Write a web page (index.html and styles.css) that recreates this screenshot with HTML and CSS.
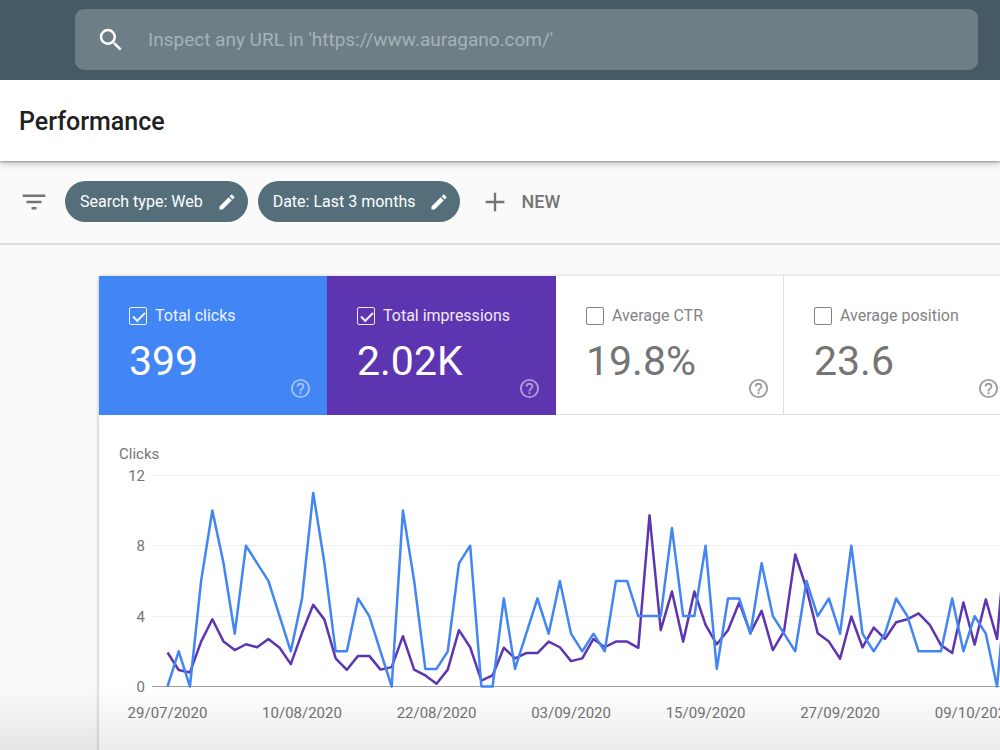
FILE: index.html
```html
<!DOCTYPE html>
<html lang="en">
<head>
    <meta charset="UTF-8">
    <meta name="viewport" content="width=device-width, initial-scale=1.0">
    <title>Performance</title>
    <link rel="stylesheet" href="styles.css">
</head>
<body>
    <header class="topbar">
        <form class="search" role="search">
            <svg class="search-icon" viewBox="0 0 24 24" aria-hidden="true">
                <path d="M15.5 14h-.79l-.28-.27A6.47 6.47 0 0 0 16 9.5 6.5 6.5 0 1 0 9.5 16c1.61 0 3.09-.59 4.23-1.57l.27.28v.79l5 4.99L20.49 19l-4.99-5zm-6 0a4.5 4.5 0 1 1 0-9 4.5 4.5 0 0 1 0 9z"/>
            </svg>
            <input type="text" class="search-input" aria-label="Inspect URL" placeholder="Inspect any URL in 'https://www.auragano.com/'">
        </form>
    </header>

    <div class="page-header">
        <h1>Performance</h1>
    </div>

    <div class="filters">
        <svg class="filter-icon" viewBox="0 0 24 24" aria-hidden="true">
            <path d="M10 18h4v-2h-4v2zM3 6v2h18V6H3zm3 7h12v-2H6v2z"/>
        </svg>
        <button type="button" class="chip">
            Search type: Web
            <svg class="chip-icon" viewBox="0 0 24 24" aria-hidden="true">
                <path d="M3 17.25V21h3.75L17.81 9.94l-3.75-3.75L3 17.25zM20.71 7.04a1 1 0 0 0 0-1.41l-2.34-2.34a1 1 0 0 0-1.41 0l-1.83 1.83 3.75 3.75 1.83-1.83z"/>
            </svg>
        </button>
        <button type="button" class="chip">
            Date: Last 3 months
            <svg class="chip-icon" viewBox="0 0 24 24" aria-hidden="true">
                <path d="M3 17.25V21h3.75L17.81 9.94l-3.75-3.75L3 17.25zM20.71 7.04a1 1 0 0 0 0-1.41l-2.34-2.34a1 1 0 0 0-1.41 0l-1.83 1.83 3.75 3.75 1.83-1.83z"/>
            </svg>
        </button>
        <button type="button" class="new-filter">
            <svg class="plus-icon" viewBox="0 0 24 24" aria-hidden="true">
                <path d="M20 13h-7v7h-2v-7H4v-2h7V4h2v7h7v2z"/>
            </svg>
            NEW
        </button>
    </div>

    <main class="content">
        <section class="card">
            <div class="metrics">
                <div class="metric metric-clicks">
                    <label class="metric-label"><input type="checkbox" checked>Total clicks</label>
                    <div class="metric-value">399</div>
                    <button type="button" class="help" aria-label="Help">
                        <svg viewBox="0 0 24 24"><path d="M11 18h2v-2h-2v2zm1-16a10 10 0 1 0 0 20 10 10 0 0 0 0-20zm0 18a8 8 0 1 1 0-16 8 8 0 0 1 0 16zm0-14a4 4 0 0 0-4 4h2a2 2 0 1 1 4 0c0 2-3 1.75-3 5h2c0-2.25 3-2.5 3-5a4 4 0 0 0-4-4z"/></svg>
                    </button>
                </div>
                <div class="metric metric-impressions">
                    <label class="metric-label"><input type="checkbox" checked>Total impressions</label>
                    <div class="metric-value">2.02K</div>
                    <button type="button" class="help" aria-label="Help">
                        <svg viewBox="0 0 24 24"><path d="M11 18h2v-2h-2v2zm1-16a10 10 0 1 0 0 20 10 10 0 0 0 0-20zm0 18a8 8 0 1 1 0-16 8 8 0 0 1 0 16zm0-14a4 4 0 0 0-4 4h2a2 2 0 1 1 4 0c0 2-3 1.75-3 5h2c0-2.25 3-2.5 3-5a4 4 0 0 0-4-4z"/></svg>
                    </button>
                </div>
                <div class="metric">
                    <label class="metric-label"><input type="checkbox">Average CTR</label>
                    <div class="metric-value">19.8%</div>
                    <button type="button" class="help" aria-label="Help">
                        <svg viewBox="0 0 24 24"><path d="M11 18h2v-2h-2v2zm1-16a10 10 0 1 0 0 20 10 10 0 0 0 0-20zm0 18a8 8 0 1 1 0-16 8 8 0 0 1 0 16zm0-14a4 4 0 0 0-4 4h2a2 2 0 1 1 4 0c0 2-3 1.75-3 5h2c0-2.25 3-2.5 3-5a4 4 0 0 0-4-4z"/></svg>
                    </button>
                </div>
                <div class="metric">
                    <label class="metric-label"><input type="checkbox">Average position</label>
                    <div class="metric-value">23.6</div>
                    <button type="button" class="help" aria-label="Help">
                        <svg viewBox="0 0 24 24"><path d="M11 18h2v-2h-2v2zm1-16a10 10 0 1 0 0 20 10 10 0 0 0 0-20zm0 18a8 8 0 1 1 0-16 8 8 0 0 1 0 16zm0-14a4 4 0 0 0-4 4h2a2 2 0 1 1 4 0c0 2-3 1.75-3 5h2c0-2.25 3-2.5 3-5a4 4 0 0 0-4-4z"/></svg>
                    </button>
                </div>
            </div>

            <svg class="chart" id="chart" width="960" height="340" role="img" aria-label="Clicks and impressions per day">
                <text class="axis-title" x="20" y="44">Clicks</text>
            </svg>
        </section>
    </main>

    <script src="chart.js"></script>
</body>
</html>
```
FILE: styles.css
```css
:root {
    --topbar: #455a64;
    --chip: #546e7a;
    --clicks: #4285f4;
    --impressions: #5e35b1;
    --grey: #757575;
    --line: #e0e0e0;
}

* {
    margin: 0;
    padding: 0;
    box-sizing: border-box;
}

body {
    font-family: Roboto, Arial, sans-serif;
    font-size: 16px;
    background-color: #fafafa;
    color: #212121;
    height: 100vh;
    overflow: hidden;
}

/* fade at the bottom edge of the window */
body::after {
    content: "";
    position: fixed;
    left: 0;
    right: 0;
    bottom: 0;
    height: 64px;
    background: linear-gradient(rgba(0, 0, 0, 0), rgba(0, 0, 0, 0.08));
    pointer-events: none;
}

button {
    font: inherit;
    color: inherit;
    border: none;
    background: none;
    cursor: pointer;
}

svg {
    display: block;
    fill: currentColor;
}

.topbar {
    position: relative;
    z-index: 1;
    background-color: var(--topbar);
    padding: 9px 22px 10px 75px;
}

.search {
    display: flex;
    align-items: center;
    gap: 22px;
    height: 61px;
    padding: 0 21px;
    border-radius: 9px;
    background-color: #6d7e86;
}

.search-icon {
    width: 30px;
    height: 30px;
    color: #fff;
}

.search-input {
    flex: 1;
    border: none;
    outline: none;
    background: none;
    font: 19px Roboto, Arial, sans-serif;
    color: #fff;
}

.search-input::placeholder {
    color: #a7b2b7;
    opacity: 1;
}

.page-header {
    position: relative;
    padding: 26px 19px 24px;
    background-color: #fff;
    box-shadow: 0 1px 2px rgba(0, 0, 0, 0.3), 0 2px 8px rgba(0, 0, 0, 0.25);
}

h1 {
    font-size: 25px;
    font-weight: 500;
    line-height: 31px;
}

.filters {
    display: flex;
    align-items: center;
    gap: 10px;
    padding: 20px 19px 21px;
    border-bottom: 2px solid var(--line);
}

.filter-icon {
    width: 30px;
    height: 30px;
    margin-right: 6px;
    color: var(--grey);
}

.chip {
    display: flex;
    align-items: center;
    gap: 14px;
    height: 41px;
    padding: 0 11px 0 15px;
    border-radius: 21px;
    background-color: var(--chip);
    color: #fff;
}

.chip-icon {
    width: 20px;
    height: 20px;
}

.new-filter {
    display: flex;
    align-items: center;
    gap: 12px;
    margin-left: 11px;
    font-size: 18px;
    font-weight: 500;
    color: var(--grey);
}

.plus-icon {
    width: 28px;
    height: 28px;
}

.content {
    padding: 31px 0 0 99px;
}

.card {
    background-color: #fff;
    box-shadow: 0 1px 4px rgba(0, 0, 0, 0.3);
    overflow: hidden;
}

.metrics {
    display: grid;
    grid-template-columns: 228px 229px 228px 230px;
}

.metric {
    display: flex;
    flex-direction: column;
    height: 139px;
    padding: 30px 15px 15px 30px;
    border-right: 1px solid var(--line);
    border-bottom: 1px solid var(--line);
    color: var(--grey);
}

.metric-clicks,
.metric-impressions {
    border: none;
    color: #fff;
}

.metric-clicks {
    background-color: var(--clicks);
}

.metric-impressions {
    background-color: var(--impressions);
}

.metric-label {
    display: flex;
    align-items: center;
    gap: 8px;
    line-height: 20px;
    white-space: nowrap;
    opacity: 0.9;
}

.metric-label input {
    appearance: none;
    width: 18px;
    height: 18px;
    border: 1px solid currentColor;
    border-radius: 2px;
    color: inherit;
}

.metric-label input:checked::before {
    content: "";
    display: block;
    width: 10px;
    height: 5px;
    margin: 4px 0 0 3px;
    border-left: 2px solid;
    border-bottom: 2px solid;
    transform: rotate(-45deg);
}

.metric-value {
    margin-top: 10px;
    font-size: 41px;
    line-height: 50px;
}

.help {
    align-self: flex-end;
    margin-top: -9px;
    opacity: 0.5;
}

.metric:nth-child(n+3) .help {
    margin-right: -2px;
    opacity: 0.7;
}

.help svg {
    width: 23px;
    height: 23px;
}

.chart text {
    font-size: 15px;
    fill: var(--grey);
}

.chart .grid {
    stroke: #eee;
    stroke-width: 1;
}

.chart .grid-zero {
    stroke: #9e9e9e;
}

.chart .series {
    fill: none;
    stroke-width: 2.5;
    stroke-linejoin: round;
}

.chart .series-clicks {
    stroke: var(--clicks);
}

.chart .series-impressions {
    stroke: var(--impressions);
}
```
FILE: chart.js
```javascript
const clicks = [
    0, 2, 0, 6, 10, 7, 3, 8, 7, 6, 4, 2, 5, 11, 7, 2, 2, 5, 4, 2,
    0, 10, 6, 1, 1, 2, 7, 8, 0, 0, 5, 1, 3, 5, 3, 6, 3, 2, 3, 2,
    6, 6, 4, 4, 4, 9, 4, 4, 8, 1, 5, 5, 3, 7, 4, 3, 2, 6, 4, 5,
    3, 8, 3, 2, 3, 5, 4, 2, 2, 2, 5, 2, 4, 3, 0, 7
];

// impressions, scaled to the clicks axis
const impressions = [
    1.93, 0.94, 0.8, 2.55, 3.82, 2.55, 2.07, 2.4, 2.23, 2.7, 2.2, 1.27, 3.05, 4.64, 3.8, 1.6, 0.95, 1.74, 1.74, 0.96,
    1.1, 2.86, 0.96, 0.63, 0.16, 0.96, 3.2, 2.23, 0.33, 0.63, 2.2, 1.6, 1.9, 1.9, 2.55, 2.23, 1.44, 1.6, 2.7, 2.23,
    2.55, 2.55, 2.2, 9.73, 3.2, 5.4, 2.55, 5.4, 3.5, 2.4, 3.2, 4.77, 3.05, 4.3, 2.07, 3.15, 7.5, 5.57, 3.03, 2.55,
    1.58, 3.98, 2.22, 3.35, 2.7, 3.65, 3.82, 4.15, 3.5, 2.35, 1.9, 4.77, 2.38, 4.95, 2.7, 10
];

const dates = ['29/07/2020', '10/08/2020', '22/08/2020', '03/09/2020', '15/09/2020', '27/09/2020', '09/10/2020'];

const chart = document.getElementById('chart');
const left = 68.5;
const step = 11.21;
const bottom = 271.5;
const unit = 17.6;

function add(tag, attrs, text) {
    const el = document.createElementNS('http://www.w3.org/2000/svg', tag);
    for (const key in attrs) {
        el.setAttribute(key, attrs[key]);
    }
    if (text !== undefined) {
        el.textContent = text;
    }
    chart.appendChild(el);
}

function drawSeries(data, name) {
    const points = data.map((v, i) => (left + i * step) + ',' + (bottom - v * unit)).join(' ');
    add('polyline', { points: points, class: 'series series-' + name });
}

// Grid lines and value labels
[12, 8, 4, 0].forEach(v => {
    const y = Math.floor(bottom - v * unit) + 0.5;
    add('line', { x1: 53, x2: 960, y1: y, y2: y, class: v === 0 ? 'grid grid-zero' : 'grid' });
    add('text', { x: 46, y: y + 5, 'text-anchor': 'end' }, v);
});

// One date label every 12 days
dates.forEach((date, i) => {
    add('text', { x: left + i * 12 * step, y: 303, 'text-anchor': 'middle' }, date);
});

drawSeries(impressions, 'impressions');
drawSeries(clicks, 'clicks');
```
